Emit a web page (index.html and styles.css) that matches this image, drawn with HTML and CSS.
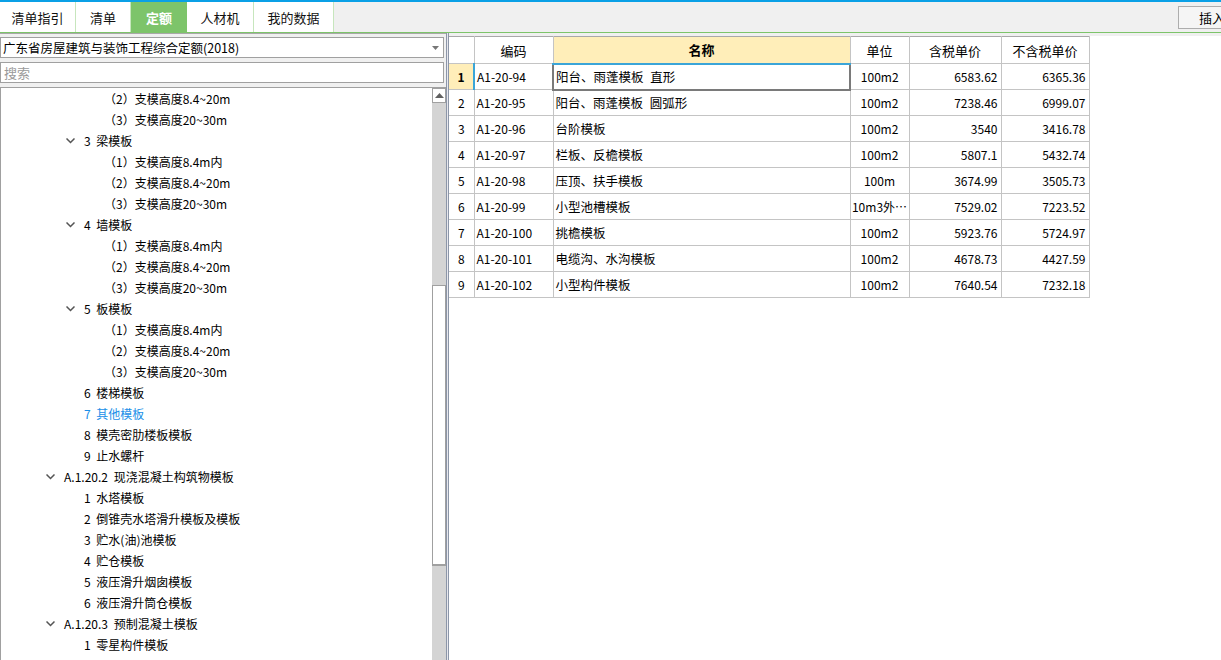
FILE: index.html
```html
<!DOCTYPE html>
<html lang="zh-CN">
<head>
<meta charset="utf-8">
<title>定额</title>
<link rel="stylesheet" href="styles.css">
</head>
<body>
<div class="topline"></div>
<div class="tabbar">
  <div class="tabs">
    <div class="tab t1">清单指引</div>
    <div class="tab t2">清单</div>
    <div class="tab t3 active">定额</div>
    <div class="tab t4">人材机</div>
    <div class="tab t5">我的数据</div>
  </div>
  <div class="insert">插入</div>
</div>
<div class="main">
  <div class="left">
    <div class="select">
      <span>广东省房屋建筑与装饰工程综合定额(2018)</span>
      <svg class="caret" width="7" height="4" viewBox="0 0 7 4"><path d="M0 0h7L3.5 4z" fill="#777"/></svg>
    </div>
    <div class="search">搜索</div>
    <div class="treebox">
      <div class="tree">
        <div class="row l4">（2）支模高度8.4~20m</div>
        <div class="row l4">（3）支模高度20~30m</div>
        <div class="row l3c"><svg class="chev" width="9" height="6" viewBox="0 0 9 6"><path d="M0.5 0.5L4.5 4.5L8.5 0.5" fill="none" stroke="#555" stroke-width="1.5"/></svg>3 梁模板</div>
        <div class="row l4">（1）支模高度8.4m内</div>
        <div class="row l4">（2）支模高度8.4~20m</div>
        <div class="row l4">（3）支模高度20~30m</div>
        <div class="row l3c"><svg class="chev" width="9" height="6" viewBox="0 0 9 6"><path d="M0.5 0.5L4.5 4.5L8.5 0.5" fill="none" stroke="#555" stroke-width="1.5"/></svg>4 墙模板</div>
        <div class="row l4">（1）支模高度8.4m内</div>
        <div class="row l4">（2）支模高度8.4~20m</div>
        <div class="row l4">（3）支模高度20~30m</div>
        <div class="row l3c"><svg class="chev" width="9" height="6" viewBox="0 0 9 6"><path d="M0.5 0.5L4.5 4.5L8.5 0.5" fill="none" stroke="#555" stroke-width="1.5"/></svg>5 板模板</div>
        <div class="row l4">（1）支模高度8.4m内</div>
        <div class="row l4">（2）支模高度8.4~20m</div>
        <div class="row l4">（3）支模高度20~30m</div>
        <div class="row l3">6 楼梯模板</div>
        <div class="row l3 sel">7 其他模板</div>
        <div class="row l3">8 模壳密肋楼板模板</div>
        <div class="row l3">9 止水螺杆</div>
        <div class="row l2c"><svg class="chev" width="9" height="6" viewBox="0 0 9 6"><path d="M0.5 0.5L4.5 4.5L8.5 0.5" fill="none" stroke="#555" stroke-width="1.5"/></svg>A.1.20.2 现浇混凝土构筑物模板</div>
        <div class="row l3">1 水塔模板</div>
        <div class="row l3">2 倒锥壳水塔滑升模板及模板</div>
        <div class="row l3">3 贮水(油)池模板</div>
        <div class="row l3">4 贮仓模板</div>
        <div class="row l3">5 液压滑升烟囱模板</div>
        <div class="row l3">6 液压滑升筒仓模板</div>
        <div class="row l2c"><svg class="chev" width="9" height="6" viewBox="0 0 9 6"><path d="M0.5 0.5L4.5 4.5L8.5 0.5" fill="none" stroke="#555" stroke-width="1.5"/></svg>A.1.20.3 预制混凝土模板</div>
        <div class="row l3">1 零星构件模板</div>
      </div>
      <div class="vscroll">
        <div class="up"><svg width="9" height="5" viewBox="0 0 9 5"><path d="M0 5L4.5 0L9 5z" fill="#606060"/></svg></div>
        <div class="track1"></div>
        <div class="thumb"></div>
        <div class="track2"></div>
      </div>
    </div>
  </div>
  <div class="divider"></div>
  <div class="right">
    <table class="grid">
      <colgroup>
        <col class="c-no"><col class="c-code"><col class="c-name"><col class="c-unit"><col class="c-p1"><col class="c-p2">
      </colgroup>
      <thead>
        <tr><th></th><th>编码</th><th class="hname">名称</th><th>单位</th><th>含税单价</th><th>不含税单价</th></tr>
      </thead>
      <tbody>
        <tr><td class="no cur">1</td><td class="code">A1-20-94</td><td class="name cursel">阳台、雨蓬模板 直形</td><td class="unit">100m2</td><td class="num">6583.62</td><td class="num">6365.36</td></tr>
        <tr><td class="no">2</td><td class="code">A1-20-95</td><td class="name">阳台、雨蓬模板 圆弧形</td><td class="unit">100m2</td><td class="num">7238.46</td><td class="num">6999.07</td></tr>
        <tr><td class="no">3</td><td class="code">A1-20-96</td><td class="name">台阶模板</td><td class="unit">100m2</td><td class="num">3540</td><td class="num">3416.78</td></tr>
        <tr><td class="no">4</td><td class="code">A1-20-97</td><td class="name">栏板、反檐模板</td><td class="unit">100m2</td><td class="num">5807.1</td><td class="num">5432.74</td></tr>
        <tr><td class="no">5</td><td class="code">A1-20-98</td><td class="name">压顶、扶手模板</td><td class="unit">100m</td><td class="num">3674.99</td><td class="num">3505.73</td></tr>
        <tr><td class="no">6</td><td class="code">A1-20-99</td><td class="name">小型池槽模板</td><td class="unit">10m3外…</td><td class="num">7529.02</td><td class="num">7223.52</td></tr>
        <tr><td class="no">7</td><td class="code">A1-20-100</td><td class="name">挑檐模板</td><td class="unit">100m2</td><td class="num">5923.76</td><td class="num">5724.97</td></tr>
        <tr><td class="no">8</td><td class="code">A1-20-101</td><td class="name">电缆沟、水沟模板</td><td class="unit">100m2</td><td class="num">4678.73</td><td class="num">4427.59</td></tr>
        <tr><td class="no">9</td><td class="code">A1-20-102</td><td class="name">小型构件模板</td><td class="unit">100m2</td><td class="num">7640.54</td><td class="num">7232.18</td></tr>
      </tbody>
    </table>
  </div>
</div>
</body>
</html>
```
FILE: styles.css
```css
* { box-sizing: border-box; }
html, body { margin: 0; padding: 0; }
body {
  width: 1221px;
  height: 660px;
  overflow: hidden;
  font-family: "Noto Sans CJK SC", "Liberation Sans", sans-serif;
  font-size: 12px;
  color: #000;
  background: #fff;
}
.topline { height: 2px; background: #0aa0e6; }
.tabbar {
  height: 31px;
  background: #f0f0f0;
  border-bottom: 1px solid #7dc46a;
  display: flex;
  justify-content: space-between;
  align-items: flex-start;
}
.tabs { display: flex; height: 30px; }
.tab {
  height: 30px;
  background: #fff;
  border-right: 1px solid #c7e6bd;
  border-left: 1px solid #c7e6bd;
  display: flex;
  align-items: center;
  justify-content: center;
  font-size: 13px;
  color: #111;
}
.t1 { width: 76px; border-left: none; }
.t2 { width: 55px; border-left: none; }
.t3 { width: 56px; border: none; }
.t4 { width: 67px; border-left: none; }
.t5 { width: 80px; border-left: none; }
.tab.active { background: #7dc46a; color: #fff; font-weight: bold; }
.insert {
  margin-top: 4px;
  width: 43px;
  height: 23px;
  background: #f5f5f5;
  border: 1px solid #adadad;
  border-right: none;
  font-size: 13px;
  padding-left: 20px;
  line-height: 21px;
  white-space: nowrap;
  overflow: hidden;
}
.main {
  display: flex;
  height: 627px;
}
.left {
  width: 446px;
  background: #f0f0f0;
  border-top: 1px solid #a8a8a8;
  padding-top: 3px;
  display: flex;
  flex-direction: column;
}
.select {
  height: 21px;
  flex: none;
  margin-right: 2px;
  background: #fff;
  border: 1px solid #a0a0a0;
  display: flex;
  align-items: center;
  justify-content: space-between;
  padding: 0 4px 0 2px;
  font-size: 12.5px;
}
.search {
  height: 21px;
  flex: none;
  margin-top: 4px;
  margin-right: 2px;
  background: #fff;
  border: 1px solid #a0a0a0;
  color: #9a9a9a;
  padding-left: 3px;
  line-height: 19px;
  font-size: 13px;
}
.treebox {
  flex: 1;
  margin-top: 4px;
  background: #fff;
  border-top: 1px solid #a0a0a0;
  border-left: 1px solid #a0a0a0;
  display: flex;
  overflow: hidden;
}
.tree { flex: 1; }
.row {
  height: 21px;
  line-height: 21px;
  white-space: nowrap;
  display: flex;
  align-items: center;
  word-spacing: 3px;
}
.l4 { padding-left: 103px; }
.l3 { padding-left: 83px; }
.l3c { padding-left: 65px; }
.l2c { padding-left: 45px; }
.chev { margin-right: 9px; }
.sel { color: #1a8fe8; }
.vscroll {
  width: 15px;
  display: flex;
  flex-direction: column;
  background: #d4d4d4;
  border-left: 1px solid #fff;
}
.up {
  height: 15px;
  background: #fff;
  border: 1px solid #a0a0a0;
  display: flex;
  align-items: center;
  justify-content: center;
}
.track1 { height: 182px; }
.thumb { height: 281px; background: #fff; border: 1px solid #a0a0a0; border-bottom-width: 2px; }
.track2 { flex: 1; }
.divider {
  width: 3px;
  border-left: 1px solid #8c96a8;
  border-right: 1px solid #8c96a8;
  background: #e8e8ee;
}
.right {
  flex: 1;
  background: #fff;
  border-top: 3px solid #f0f0f0;
}
.grid {
  border-collapse: collapse;
  table-layout: fixed;
  width: 640px;
  border-top: 1px solid #a8a8a8;
}
.c-no { width: 25px; }
.c-code { width: 79px; }
.c-name { width: 297px; }
.c-unit { width: 59px; }
.c-p1 { width: 92px; }
.c-p2 { width: 88px; }
.grid th, .grid td {
  border: 1px solid #c4c4c4;
  height: 26px;
  padding: 0;
  white-space: nowrap;
  overflow: hidden;
}
.grid th {
  height: 27px;
  font-weight: normal;
  font-size: 13px;
  text-align: center;
}
.grid thead th { border-top: 1px solid #a8a8a8; }
.grid th:first-child, .grid td:first-child { border-left: none; }
.grid th.hname {
  background: #ffeeb9;
  font-weight: bold;
  border-bottom: 2px solid #3ba5d8;
}
.no { text-align: center; }
.no.cur { background: #ffeeb9; font-weight: bold; border-right: 2px solid #3ba5d8 !important; }
.code { padding-left: 2px !important; }
.name { padding-left: 2px !important; font-size: 12.5px; word-spacing: 4px; }
.cursel { border: 2px solid #7a7a7a !important; }
.unit { text-align: center; }
.num { text-align: right; padding-right: 3px !important; }
```
